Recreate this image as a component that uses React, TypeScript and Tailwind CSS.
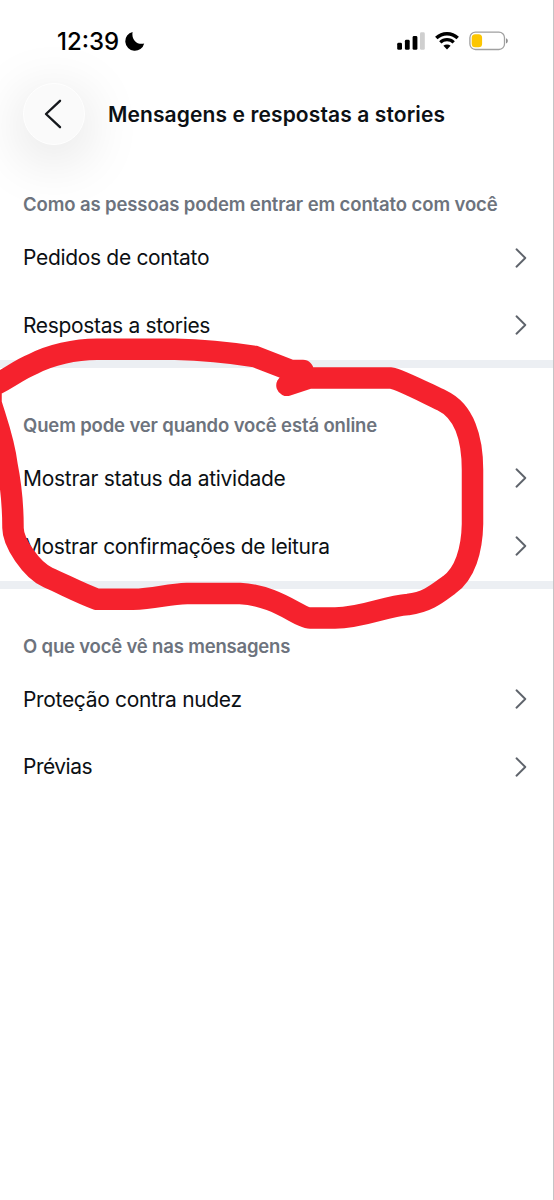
import { FC } from 'react';

interface Section {
  title: string;
  titleClasses: string;
  items: { label: string; classes: string }[];
}

const sections: Section[] = [
  {
    title: 'Como as pessoas podem entrar em contato com você',
    titleClasses: 'tracking-[-0.11px]',
    items: [
      { label: 'Pedidos de contato', classes: 'tracking-[-0.32px]' },
      { label: 'Respostas a stories', classes: 'tracking-[-0.34px]' },
    ],
  },
  {
    title: 'Quem pode ver quando você está online',
    titleClasses: 'tracking-[-0.14px]',
    items: [
      { label: 'Mostrar status da atividade', classes: 'tracking-[-0.28px]' },
      { label: 'Mostrar confirmações de leitura', classes: 'tracking-[-0.35px]' },
    ],
  },
  {
    title: 'O que você vê nas mensagens',
    titleClasses: 'tracking-[-0.18px]',
    items: [
      { label: 'Proteção contra nudez', classes: 'tracking-[-0.33px]' },
      { label: 'Prévias', classes: 'tracking-[-0.5px]' },
    ],
  },
];

const MoonIcon: FC = () => (
  <svg viewBox="0 0 20 20" className="ml-[6px] h-5 w-5 fill-black">
    <path d="M7.6.9C6.3 7.8 11 14.2 19.2 12.6A9.6 9.6 0 1 1 7.6.9Z" />
  </svg>
);

const SignalIcon: FC = () => (
  <svg viewBox="0 0 28 18" className="h-[18px] w-7">
    <rect x="0.2" y="10.8" width="4.8" height="7" rx="1.4" />
    <rect x="7.9" y="7.8" width="4.8" height="10" rx="1.4" />
    <rect x="15.6" y="4" width="4.8" height="13.8" rx="1.4" />
    <rect x="23" y="0.3" width="4.8" height="17.5" rx="1.4" fill="#cfcfcf" />
  </svg>
);

const WifiIcon: FC = () => (
  <svg viewBox="0 0 24 18" className="ml-[10px] h-[18px] w-6">
    <path d="M1.3 6.1A15.5 15.5 0 0 1 22.7 6.1" fill="none" stroke="#000" strokeWidth="3.5" />
    <path d="M5.3 10.4A9.7 9.7 0 0 1 18.7 10.4" fill="none" stroke="#000" strokeWidth="3.3" />
    <path d="M8.4 13.8A5.3 5.3 0 0 1 15.6 13.8L12 17.4Z" />
  </svg>
);

const BatteryIcon: FC = () => (
  <svg viewBox="0 0 40 20" className="ml-[10px] h-5 w-10">
    <rect x="0.9" y="1.1" width="34.6" height="17.4" rx="5.6" fill="none" stroke="#a0a0a0" strokeWidth="1.3" />
    <rect x="2.7" y="3.3" width="10.4" height="13" rx="3.5" fill="#fcc602" />
    <path d="M37 7.2c2.4.8 2.4 4.4 0 5.2Z" fill="#8f8f8f" />
  </svg>
);

const ChevronIcon: FC = () => (
  <svg viewBox="0 0 12 20" className="h-5 w-3 fill-none stroke-[#5f646c]">
    <path d="M1.5 1.3 10.3 10 1.5 18.7" strokeWidth="1.9" strokeLinecap="round" strokeLinejoin="round" />
  </svg>
);

// hand drawn marker line around the second section
const Marker: FC = () => (
  <svg
    viewBox="0 0 554 1200"
    className="pointer-events-none absolute top-0 left-0 h-[1200px] w-[554px] fill-none stroke-[#f5222d]"
  >
    <path
      d="M287 385.3 309 378H391C400 379.5 424 392 442 400.5C464 411 472.5 438 472.5 470V524C472 550 465 574 449 585C438 593 428 602 408 604.5C385 606 363 618 335 618H310C300 618 275 595 240 593.4H187C167 594 155 599 133 599.3H97C82 594 65 585 48 577.5C31 570 13 542 13 528C13 503 10 480 7 465C4 440 -4 420 -9 403V387C10 378 18 370 33 364C50 355 75 349.3 97 349.3H175C205 350 232 353 255 356.5L291 370.5H303"
      strokeWidth="21.5"
      strokeLinecap="round"
      strokeLinejoin="round"
    />
  </svg>
);

const App: FC = () => (
  <div className="relative h-[1200px] w-[554px] overflow-hidden border-r border-[#c4c4c6] bg-white font-['Inter',sans-serif] text-[#0c1014]">
    <div className="flex h-[82px] items-center justify-between pr-[44px] pl-[57px]">
      <div className="flex items-center text-black">
        <span className="pt-px text-[24px] font-medium">12:39</span>
        <MoonIcon />
      </div>
      <div className="flex items-center">
        <SignalIcon />
        <WifiIcon />
        <BatteryIcon />
      </div>
    </div>

    <header className="flex h-[65.5px] items-center pl-[23px]">
      <button
        type="button"
        className="
          flex h-[62px] w-[62px] items-center justify-center
          -mt-[2px]
          rounded-full
          border border-white
          bg-[#fafafa]
          shadow-[0_12px_60px_rgba(0,0,0,0.15)]
        "
      >
        <svg viewBox="0 0 18 30" className="mr-[3px] h-[30px] w-[18px] fill-none stroke-[#15181c]">
          <path d="M16 1.8 2 15 16 28.2" strokeWidth="2.4" strokeLinecap="round" strokeLinejoin="round" />
        </svg>
      </button>
      <h1 className="ml-[23px] text-[21px] font-semibold tracking-[0.11px] whitespace-nowrap">
        Mensagens e respostas a stories
      </h1>
    </header>

    <main>
      {sections.map(({ title, titleClasses, items }) => (
        <section
          key={title}
          className="[&:not(:last-child)]:after:block [&:not(:last-child)]:after:h-[8.2px] [&:not(:last-child)]:after:bg-[#eceff3]"
        >
          <h2 className={`h-[77.3px] pt-[44.8px] pl-[23px] text-[18.5px] leading-[25px] font-semibold whitespace-nowrap text-[#6d737d] ${titleClasses}`}>
            {title}
          </h2>
          <ul>
            {items.map(({ label, classes }) => (
              <li key={label} className="flex h-[67.6px] items-center justify-between pr-[26px] pb-[2px] pl-[23px]">
                <span className={`pt-[1.2px] text-[21px] whitespace-nowrap ${classes}`}>{label}</span>
                <ChevronIcon />
              </li>
            ))}
          </ul>
        </section>
      ))}
    </main>

    <Marker />
  </div>
);

export default App;
